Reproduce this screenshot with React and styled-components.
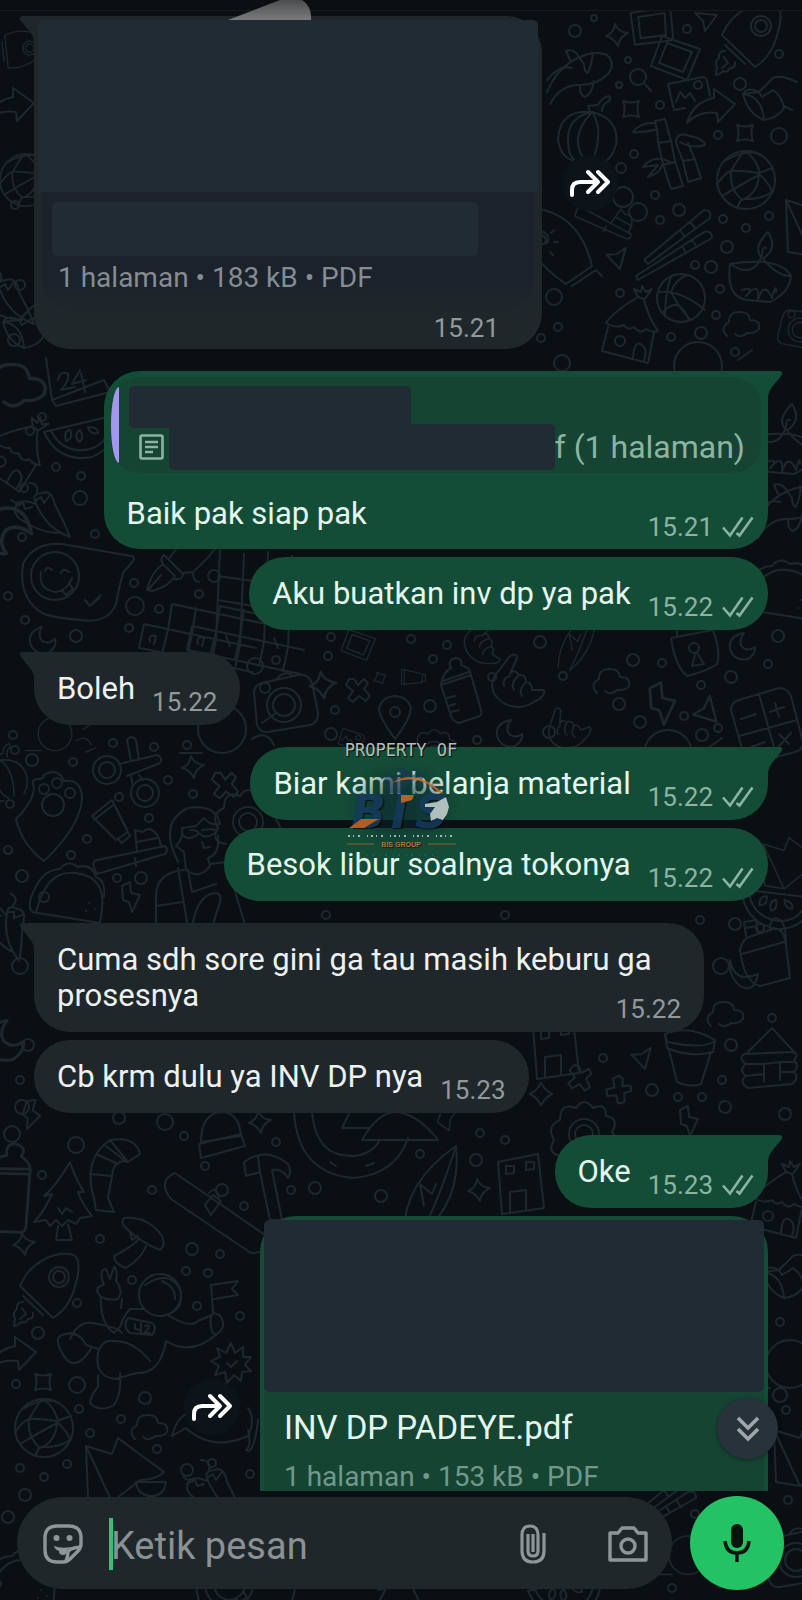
import React from 'react';
import styled, { createGlobalStyle, css } from 'styled-components';

const colors = {
  page: '#0a0f13',
  doodle: '#20272c',
  incoming: '#1f272a',
  outgoing: '#144d37',
  outgoingInset: '#154433',
  cover: '#202b33',
  textIn: '#eef1f2',
  metaIn: '#92999c',
  metaOut: '#8db3a1',
  accent: '#23c264',
};

const GlobalStyle = createGlobalStyle`
  *, *::before, *::after {
    box-sizing: border-box;
  }

  body {
    margin: 0;
    background: ${colors.page};
    font-family: Roboto, "Liberation Sans", sans-serif;
  }

  button {
    border: 0;
    padding: 0;
    font: inherit;
    cursor: pointer;
  }
`;

const Page = styled.div`
  position: relative;
  display: flex;
  flex-direction: column;
  height: 100vh;
  overflow: hidden;
`;

const WallpaperSvg = styled.svg`
  position: absolute;
  inset: 0;
  width: 100%;
  height: 100%;
  fill: none;
  stroke: ${colors.doodle};
  stroke-width: 2;
  stroke-linecap: round;
  stroke-linejoin: round;
`;

const TopEdge = styled.header`
  position: relative;
  flex: none;
  height: 11px;
  background: #0b0f12;
  border-bottom: 1px solid #161b1e;
`;

const PeekSvg = styled.svg`
  position: absolute;
  left: 228px;
  top: 0;
  z-index: 1;
`;

const Chat = styled.main`
  position: relative;
  flex: 1;
  min-height: 0;
  padding: 5px 34px 0;
  overflow: hidden;
`;

const List = styled.ol`
  display: flex;
  flex-direction: column;
  margin: 0;
  padding: 0;
  list-style: none;
`;

const Row = styled.li`
  display: flex;
  flex: none;
  align-items: center;
  gap: 20px;
  justify-content: ${({ $out }) => ($out ? 'flex-end' : 'flex-start')};
  margin-top: ${({ $first }) => ($first ? '22px' : '8px')};

  &:first-child {
    margin-top: 0;
  }
`;

const tail = css`
  border-top-${({ $out }) => ($out ? 'right' : 'left')}-radius: 0;

  &::before {
    content: '';
    position: absolute;
    top: 0;
    ${({ $out }) => ($out ? 'left: 100%;' : 'right: 100%;')}
    width: 15px;
    height: 28px;
    background: inherit;
    clip-path: path('M0 0H12Q16 1 13 5L4 16Q0 21 0 28Z');
    ${({ $out }) => !$out && 'transform: scaleX(-1);'}
  }
`;

const Bubble = styled.div`
  position: relative;
  max-width: 670px;
  border-radius: 36px;
  color: ${({ $out }) => ($out ? '#e4f7ee' : colors.textIn)};
  background: ${({ $out }) => ($out ? colors.outgoing : colors.incoming)};
  ${({ $tail }) => $tail && tail}
`;

const TextBubble = styled(Bubble)`
  padding: 19px ${({ $out }) => ($out ? '14px' : '23px')} 10px 23px;
`;

const QuoteBubble = styled(Bubble)`
  padding: 6px 7px 9px;
`;

const DocBubble = styled(Bubble)`
  width: 508px;
  padding: 4px 4px 8px;
`;

const Text = styled.p`
  display: flow-root;
  margin: 0;
  font-size: 31px;
  line-height: 36px;
`;

const ReplyText = styled(Text)`
  margin: 23px 7px 0 16px;
`;

const Meta = styled.span`
  float: right;
  display: flex;
  align-items: center;
  gap: 9px;
  margin: 18px 0 0 17px;
  color: ${({ $out }) => ($out ? colors.metaOut : colors.metaIn)};
  font-size: 26px;
  line-height: 26px;
`;

const Quote = styled.div`
  position: relative;
  display: flex;
  align-items: center;
  gap: 10px;
  padding-right: 16px;
  border-radius: 28px;
  background: ${colors.outgoingInset};
`;

const QuoteBar = styled.span`
  width: 8px;
  height: 76px;
  border-radius: 8px 0 0 8px / 38px 0 0 38px;
  background: #a397f0;
`;

const QuoteBody = styled.div`
  flex: 1;
  padding: 9px 0 3px;
`;

const Cover = styled.div`
  flex: none;
  width: ${({ $w }) => $w};
  height: ${({ $h }) => $h};
  border-radius: 5px;
  background: ${colors.cover};
`;

const QuoteFile = styled.div`
  display: flex;
  align-items: center;
  margin-top: -4px;
  padding-left: 10px;
  color: ${colors.metaOut};
  font-size: 32px;
  line-height: 36px;

  svg {
    margin-right: 5px;
  }
`;

const DocInfo = styled.div`
  margin: 0 ${({ $out }) => ($out ? '0' : '4px')};
  padding: ${({ $out }) => ($out ? '16px 20px 97px' : '10px 10px 19px')};
  border-radius: 0 0 32px 32px;
  background: ${({ $out }) => ($out ? colors.outgoingInset : 'linear-gradient(#1b222b 75%, #1f272a)')};
`;

const DocTitle = styled.div`
  margin-bottom: 14px;
  font-size: 33px;
  line-height: 40px;
`;

const DocDetails = styled.div`
  margin: ${({ $out }) => ($out ? '0' : '7px 6px 0')};
  color: ${({ $out }) => ($out ? '#73988a' : '#858c92')};
  font-size: 28px;
  line-height: 30px;
`;

const DocTime = styled.div`
  padding: 3px 39px 0 0;
  color: ${colors.metaIn};
  font-size: 26px;
  line-height: 26px;
  text-align: right;
`;

const ForwardButton = styled.button`
  display: grid;
  place-items: center;
  width: 56px;
  height: 56px;
  border-radius: 50%;
  background: #0c141a;
`;

const JumpButton = styled.button`
  position: absolute;
  right: 24px;
  bottom: 32px;
  display: grid;
  place-items: center;
  width: 61px;
  height: 61px;
  border-radius: 50%;
  background: #27323a;
  box-shadow: 0 1px 4px rgba(0, 0, 0, 0.4);
`;

const Composer = styled.form`
  position: relative;
  display: flex;
  flex: none;
  align-items: center;
  gap: 18px;
  padding: 5px 18px 10px 17px;
`;

const Field = styled.div`
  display: flex;
  flex: 1;
  align-items: center;
  min-width: 0;
  height: 92px;
  padding: 2px 24px 0 26px;
  border-radius: 46px;
  background: ${colors.incoming};
`;

const FieldInput = styled.input`
  flex: 1;
  min-width: 0;
  height: 52px;
  margin: 0 26px;
  padding: 3px 0 0;
  border: 0;
  border-left: 4px solid #35c275;
  outline: 0;
  color: ${colors.textIn};
  background: transparent;
  font-family: inherit;
  font-size: 38px;
  text-indent: -2px;

  &::placeholder {
    color: #8b9194;
    opacity: 1;
  }
`;

const IconButton = styled.button`
  display: grid;
  place-items: center;
  background: transparent;
  color: #8f9699;

  & + & {
    margin-left: 62px;
  }
`;

const MicButton = styled.button`
  display: grid;
  place-items: center;
  width: 94px;
  height: 94px;
  border-radius: 50%;
  background: ${colors.accent};
  color: #08130d;
`;

const Watermark = styled.div`
  position: absolute;
  top: 46.25%;
  left: 50%;
  transform: translateX(-50%);
  color: #b4bcbf;
  font: 17px/20px "DejaVu Sans Mono", monospace;
  text-align: center;
  text-shadow: 1px 1px 1px rgba(0, 0, 0, 0.8);
  pointer-events: none;

  svg {
    display: block;
  }
`;

const doodles = {
  rocket: (
    <>
      <path d="M-30-2C-20-26 5-38 24-33Q32-28 26-5 20 20 3 30ZM-27 8-7 27" />
      <circle cx="9" cy="-11" r="10" />
      <circle cx="9" cy="-11" r="6" />
      <path d="M-27 14q-7 0-6 7-5 4-2 9l-1 8q5-1 7-4 5 2 7-3 6 0 5-6M-28 20l4 6-6 5" />
    </>
  ),
  globe: (
    <>
      <circle r="29" />
      <path d="M-20-20Q2-32 15-25M-29 4Q-20-8-15-9T13-7L27-12M-24 16Q-4 4 13-5M-15-9Q-6-24-2-29M-15-9Q-17 8-5 19M13-6Q12 14-4 20M14-7Q10-22 0-28M-5 20l-4 8M-5 19Q14 20 24 13M13-6Q24 4 26 12" />
    </>
  ),
  star: <path d="M-2-11Q1-3 11-2 2 2 1 11-3 3-11 1-3-2-2-11Z" />,
  spark: <path d="M-8-8Q0-5 8-8 5 0 8 8 0 5-8 8-5 0-8-8Z" />,
  plane: <path d="M-11-9 11-7-1 9-3-1Z" />,
  arrow: <path d="M-24 17Q-18-4 3-8V-17L24-2 7 16 6 7Q-12 4-24 17Z" />,
  boot: <path d="M-27-8Q-22-16-11-10L3-24Q10-28 27-20M-11-10-8-5 3-12Q12-6 14 6 8 16-6 18-22 12-27-8ZM-27-8Q-8-6-6 18M14 4l8 4" />,
  photo: <path d="M-16-22 22-9 9 22-27 8ZM-11-15 14-6 5 14-19 5Z" />,
  picture: (
    <>
      <path d="M-20-11 15-18Q18-18 19-14L22 1M-20-11-14 15-3 13M-12 7-8-3-3 3 2-2 7 6" />
      <circle cx="10" cy="-10" r="4" />
    </>
  ),
  magnifier: (
    <>
      <circle cx="-2" cy="-3" r="8" />
      <path d="M4 3l7 8" />
    </>
  ),
  pumpkin: <path d="M4-25Q-28-28-30 2-28 20-14 24M4-25Q-20-20-20 2T-9 24M4-25Q-10-10-10 3T-2 24M4-25Q16-8 5 23M4-25Q32-18 28 8 24 20 18 24M2-25l-2-6 10-1Q14-40 21-41q3 4-2 6-5 3-5 9" />,
  bamboo: <path d="M-13-34Q-10-22-10-13L-5 9 3 34 15 31 7 6 3-14-3-36ZM-10-12 3-14M-6 10 7 7M-13-32Q-28-33-35-23-25-22-11-26M8-12 15 6 20 27 33 23 27 5 20-12M15 6 27 4M8-12Q8-24 22-19 36-16 37-10 24-6 12-13M4 8Q-14-2-25 12L-10 10-20 22Q-7 18-6 10" />,
  fish: <path d="M-35 26Q-24 0-2-9 14-16 25-11 34-2 26 8 14 20-5 19-22 20-32 38M-35 14Q-22-2-10 2M-12-6-16-15Q-8-18-3-9L2-2q0 8 4 9Q12-8 10-14M-2 20Q-2 30 3 31 10 28 12 15" />,
  peppers: <path d="M-15-12Q-5 15 20 24 14 8 5-8 2-24-8-20-18-19-15-12ZM-13-20q2-10-8-10M-15-12l6-4 3 6 6-8M-15-9Q-24-14-33-10-38 0-30 6-10 20 8 20M-33-7l6-3 2 6 7-2M-34-10l-5-3" />,
  melon: <path d="M-32-5 40-22Q44 8 16 20-18 26-32-5ZM-25-6Q-12 18 14 12 34 6 34-19M-10 4q-3-10 4-11 4 8-4 11ZM3 5q-6-8 1-12 5 9-1 12ZM12-10q10 0 10 6-8 2-10-6Z" />,
  laughing: (
    <>
      <path d="M-53-18Q-42-40-14-38L55-26Q60-25 57-21L47-9Q42 10 40 22 32 42 5 38-20 36-32 32-58 18-53-18Z" />
      <circle cx="-21" cy="-6" r="24" />
      <path d="M-35-10Q-38 8-20 10-8 8-4-4M-14 8l4 5 7-6-4-6M-31-11q2-6 7-1M-15-9q2-6 8-1M9 18l5 6 9-8M16 22l9-9" />
    </>
  ),
  calendar: <path d="M-30-30-24 12-20 18 34 4 28-8-24 12M-18-8q2-10 10-6 2 6-7 16l14-3M4-18-4-4 10-8M5-15 9 4" />,
  pen: <path d="M-28 22Q-24 4-12-4L0 8Q-6 18-22 23ZM-12-4q-4-6 1-9L8 6q0 6-8 5M-26 21l12-14M-6-9 6-26M8 5 18 4Q34-10 42-22M18 4q0 10 6 10" />,
  crossword: <path d="M-56 4 56 28M-60 28 52 52M-56 4l-5 24M-32 10l-6 24M-8 14l-5 24M16 20l-5 24M40 25l-5 24M-28-16 66 4M-28-16-32 10M-4-12-8 14M20-70 16 20M44-66 40 25M18-44 60-38M18-20 64-12M-50 22q-2-8 6-6l-2 8M26 16l4 10" />,
  moon: <path d="M2-13Q-14-10-12 3-8 16 6 13 14 8 13 1 6 6 0 1-4-5 2-13Z" />,
  pulley: (
    <>
      <path d="M-14-36Q-18-44-10-44-4-44-4-48 10-56 16-42 34-44 34-24 32 4-4 38-26 22-32-4-14-22-14-36Z" />
      <circle cx="5" cy="-18" r="11" />
      <circle cx="-4" cy="-34" r="5" />
      <circle cx="9" cy="-40" r="5" />
      <circle cx="22" cy="-30" r="5" />
    </>
  ),
  scissors: (
    <>
      <circle cx="-20" cy="2" r="14" />
      <circle cx="-20" cy="2" r="8" />
      <circle cx="18" cy="25" r="14" />
      <circle cx="18" cy="25" r="8" />
      <path d="M-8-4 30-13Q36-11 33-5L0 8M4-7 0-28Q4-34 9-28L12-8M4 8 6 18M12 7l4 5" />
    </>
  ),
  cup: <path d="M-18-10 2-26 18 6 6 14ZM-16-6 3-21M8 13l4 4 8-7-3-6" />,
  brush: <path d="M-36 12Q-40 4-34 2L34-12Q38-8 34-4L-34 16ZM6-6 4-28 12-26Q20-34 28-20L30-12M6-16l20-4M4 0l1 8" />,
  taco: (
    <>
      <path d="M-32 20Q-22-24 8-20 38-16 34 16L32 30-30 20M-32 20Q-42 18-36 2-26-24-8-24 0-34 10-26 24-30 28-16 38-12 36 4" />
      <circle cx="-24" cy="4" r="5" />
      <path d="M21 10l0 0M27 16l0 0M18 18l0 0" />
    </>
  ),
  bolt: <path d="M-8-12 0-16 1-5 10-3 2 14-1 4-7 2Z" />,
  camera: (
    <>
      <path d="M-30-12Q-30-20-22-22L14-30Q24-32 28-22L34 8Q34 18 26 20L-16 27Q-24 28-27 20ZM-8-25Q0-36 10-29" />
      <circle r="17" />
      <circle r="11" />
      <circle cx="-19" cy="-17" r="5" />
    </>
  ),
  cross: <path d="M-9-11-4-11 0-5 6-11 10-7 6-1 12 6 8 11 1 6-5 12-10 8-5 1-12-5Z" />,
  pin: (
    <>
      <path d="M0 22Q-16 0-16-8-14-20 0-21 14-20 16-8 14 4 0 22Z" />
      <circle cy="-5" r="5" />
    </>
  ),
  bottle: <path d="M-22-5 8-15 18 20Q20 26 14 27L-4 33Q-10 32-12 26ZM-22-5Q-20-18-12-22-16-30-8-32 0-32-2-25 8-22 8-15M-20-9 6-18M-16 8l8-2M-14 16l6-2M-12 22l8-2" />,
  hand: <path d="M0-26Q6-30 7-24L0-8Q4-14 9-7 16-8 16 0 22 0 22 8L34 8Q36 14 24 20 8 30-8 20-24 8-14-8ZM-6 4q-2-8 6-10M4 8q-4-6 4-14M12 14q-4-6 4-14" />,
  cloud: <path d="M-14 12Q-22 4-12-2-12-13 0-12 8-12 9-4 20-4 18 5 14 10 6 9 0 15-6 10-12 12Z" />,
  lock: (
    <>
      <path d="M-24-14 18-22Q26 0 22 12 10 20-8 24-20 14-24-14ZM-18-16-18-30M12-22 10-32M0 3-3 14 9 12 2 1" />
      <circle cx="-1" cy="-4" r="5" />
    </>
  ),
  calculator: <path d="M-34-10Q-34-18-26-20L14-32Q22-32 26-24L38 22Q38 30 30 32L-8 42Q-18 42-22 32ZM-6-26 12 38M-26 16 32 0M-24-1 -9-6M5-8 19-13M10-17 14-3M14 14 24 24M26 13 14 26M-14 27 0 22M-12 34 2 29" />,
  chopsticks: <path d="M-32 20 28-30Q36-30 34-22L-28 24ZM-40 36 28-8Q36-10 36-2L-38 40ZM4-10 8-4M14-18 19-12M6 6 10 13M16 0 21 7" />,
  ball: (
    <>
      <circle r="24" />
      <path d="M-22-6Q0-8 24 12M-10-22Q-16-4-16 18M6-23Q-6-18-10-6-2 10 10 22M-18 14Q-8 4-2 8T8 22" />
    </>
  ),
  lamp: <path d="M-30-4Q-34 28-14 32L10 34Q30 24 31 8 20-12-30-4ZM-28-3Q-8 10 1-10M4-8Q18 8 30 8M2-10Q-8-20 8-36 18-20 4-10ZM2-12q0-10 4-8M-18 22Q-4 18-14 28 0 12-2 32 4 12 12 30 16 14 16 24" />,
  hut: (
    <>
      <path d="M-26-12Q-20-22 6-38L12-36Q16-18 26-4 20-2 14-6 8 0 2-8-4-4-8-10-16-6-26-12ZM-24-8-30 16 16 28 22-2M6-38l-4-8 7 3 1-6 4 6 6-3-8 11M1 24Q2 4 10 10 16 14 12 26" />
      <circle cx="-12" cy="6" r="5" />
    </>
  ),
  surfboard: <path d="M-28-40Q18-34 30 18L4 36Q-26 16-42-16-44-34-28-40ZM4 36 30 18M10 38 34 22 40 28M-24-8a4 4 0 1 1 5 4q-8 0-7-8 6-8 12 0 1 4-1 7M-22-20v-4M-8-6h4M-36-6h-3M-22 8v4M-11-15l3-3M-33-15-36-18M-12 4l3 3" />,
  tree: <path d="M4-44Q-10-20-22-10L-14-12Q-22 6-32 16L-20 14-16 20-10 14-4 20 2 14 10 18 14 12 26 10Q16-2 12-14L18-14Q10-26 4-44ZM-8 20-10 34H6L2 18M-8 2l4 6 4-6 6 4" />,
  mushroom: <path d="M-16-22Q8-24 22-4 26 6 20 10 0 2-14-12-20-18-16-22ZM-2 0Q-10 8-26 16-26 24-14 28 2 18 6 6M-10-8l2 8 6-4" />,
  astronaut: (
    <>
      <circle cx="2" cy="-40" r="21" />
      <path d="M-13-50Q10-66 22-46 28-24 4-19M4-54Q18-48 17-36M-57-38Q-58-12-44-2L-38-8Q-34-20-28-26H-14M-57-38Q-66-48-54-50-60-66-52-66L-48-56-44-68Q-40-66-42-54-34-44-40-36-48-34-57-38M-36-36-37-27M10-20Q32-6 40-14L54-20M8 6Q34 22 60-2M56-22Q66-20 65-8 58 4 54-4 50-18 56-22ZM55-22 53-50 80-54 74-46 80-40 56-36M8 6Q2 40-22 38L-42 44Q-64 42-60 18-56 4-44 6-24 6-8 26M-38 38Q-36 58-44 70-58 78-68 68-66 58-60 52L-60 40M-60 14-72 10Q-80-6-96 0-106 4-92 24-80 36-66 12M-88 4Q-80-14-66-12-40-8-36-2" />
      <path d="M-30-17-6-12Q0-8-6 0L-28-2Q-36-8-30-17ZM-23-11v5l6 1M-17-12v11M-13-9q5-2 4 2l-5 5h6" />
    </>
  ),
  burst: <path d="M0-20 4-10 12-16 12-6 20-6 14 2 20 8 11 9 10 18 3 12-4 20-6 9-16 12-12 3-20-2-11-6-14-15-5-10ZM-4 0l4 4 6-6" />,
  sail: <path d="M-26-20-24 32 0 36ZM-26-20 0-12 6-28 52 6Q44 14 28 14L0 36ZM24 16H54Q52 30 40 30 26 30 24 16Z" />,
  whale: <path d="M-50 20Q-44-2-30-4-32-24-18-24L8-18M-50 20-36 12Q-10 36 26 20 34 4 26-8M26 14Q30 30 24 34 32 40 36 4" />,
  shrimp: <path d="M-32 30Q-44-8-16-28 10-32 14-14L2-6Q-12-10-14 8L-18 30-12 44-30 42ZM-16-28 2-6M-30-14-8-4M-36 6-14 8M-20-22 -2-8" />,
  hammer: <path d="M-22-18Q0-34 22-16 26-8 22-2 16-12 6-10L16 40H4L-6-8-20-4ZM-8-24-6-8" />,
  ring: <path d="M-58-32Q-54 30 2 34 44 30 56-6M-40-32Q-36 14 2 12 20 10 28-4M-10-16-2-32M-10-16H18M10-4Q26-32 44-32 66-30 86-4ZM-22 18l6 4M14 22l8-3" />,
  beanie: <path d="M-18 4Q-18-24 2-26 20-26 22-2ZM-20 6 22-4 26 8-18 20ZM-2-27q0-8 6-6 6-4 4 5" />,
  flower: (
    <>
      <circle r="15" />
      <circle r="9" />
      <path d="M-8-26Q0-38 9-26 22-32 22-18 36-16 28-2 38 10 24 14M-8-26Q-24-32-24-14-38-8-30 6-38 20-22 22" />
    </>
  ),
  pot: <path d="M-24-26Q0-36 26-20 18-10-22-18ZM-24-26-22-12Q2-2 24-8L26-20M-20-10-12 22Q2 28 12 24L22-8" />,
  cabin: <path d="M-20-8 4-32 28-6M-24-6Q-30-2-22 4-30 10-22 16-30 22-20 28L24 24Q32 18 26 12 32 6 26 0 32-6 24-8ZM-4 22V4L12 2V20M-22 4H-4M12 2H26M-22 16-4 14M12 12H26" />,
  milk: <path d="M-20-8Q-18-20-8-22L10-28Q24-34 26-12L30 20 0 28Q-16 24-20-8ZM-14-22-16-36-4-38-2-24M-14-30-4-32M10-28Q10-44 20-38 26-34 26-14M-18-4 24-16M-30 2Q-26 26-2 16-6 36-20 28-32 18-30 2Z" />,
  person: <path d="M-14 0Q-34-40-4-54 24-58 28-38 18-36 12-44L4-36-10-34Q-8-24-16-16L-8-10-6 8Q8 18 18 4L16-4Q28-8 26-26M-10-28q6 8 16 0 2-4-8-4M8-28q6 6 16-2 2-4-14-2M10-20l2 6 6-1M-8 8Q-34 10-36 32V66M-14 6-4 66M18 2 34 0 54 66M-4 8 0 30 24 22M-36 44-10 40M0 66Q4 38 18 32 34 28 26 46L20 66" />,
  house: <path d="M-22-18 18-26 24 28-18 34ZM-10 32V12L6 10V30M-14-6V-14H-6V-7ZM6-10V-18H14V-11Z" />,
  leaf: <path d="M-24 40Q-24-10 28-46 34 10-8 44M-8 44Q10 10 28-46M-4 14-8-8 4 2 8-8" />,
  board: <path d="M-40-42Q-58-34-44-16L36 38Q58 38 50 20ZM-10-10-2-20 6-14-4 0ZM-6-22q6-8 10 4" />,
  ghost: (
    <>
      <circle cy="-6" r="24" />
      <path d="M-42 18h22M30 4q14-10 22 6M40-12l14-10M44 20l14-6" />
    </>
  ),
};

const wallpaper = [
  ['rocket', 752, 37], ['rocket', 50, 1288], ['globe', 746, 180], ['globe', 44, 1428], ['globe', 26, 180, 0, 0.9],
  ['star', 617, 35], ['spark', 631, 109], ['spark', 745, 133], ['plane', 706, 22], ['plane', 615, 257, 100],
  ['photo', 678, 58], ['photo', 655, 25, -28], ['picture', 688, 95], ['arrow', 711, 106], ['boot', 770, 102],
  ['magnifier', 640, 80], ['pumpkin', 588, 137], ['bamboo', 668, 155], ['fish', 582, 66], ['surfboard', 562, 248],
  ['chopsticks', 676, 240], ['ball', 681, 298], ['lamp', 760, 268], ['hut', 632, 335], ['cloud', 741, 324],
  ['ghost', 698, 372], ['sail', 812, 220], ['brush', 604, 224, 40, 0.8], ['camera', 800, 330, 20, 0.7],
  ['peppers', 50, 513], ['melon', 76, 437], ['calendar', 76, 388], ['laughing', 76, 582], ['pen', 175, 568],
  ['crossword', 200, 620], ['moon', 42, 640, -10], ['arrow', 10, 105], ['rocket', 20, 50, 40, 0.7], ['cloud', 14, 385, 0, 1.7],
  ['hut', 14, 460, 20], ['peppers', 14, 300], ['boot', 30, 330], ['moon', 8, 530, 90, 1.8],
  ['pin', 395, 717], ['camera', 284, 705], ['star', 323, 685, 0, 1.2], ['cross', 358, 690], ['bottle', 463, 690],
  ['hand', 510, 682], ['hand', 562, 730, -20, 0.8], ['hand', 480, 640, 30, 0.8], ['cloud', 611, 681], ['bolt', 661, 705, 0, 1.4],
  ['plane', 704, 712, 70, 1.2], ['lock', 695, 652], ['moon', 742, 646], ['calculator', 765, 720], ['moon', 509, 733],
  ['flower', 434, 752, 0, 0.7], ['leaf', 575, 640, 0, 0.7], ['crossword', 248, 622], ['picture', 350, 740, 30, 0.6],
  ['photo', 360, 645, 0, 0.7], ['ghost', 668, 760], ['spark', 380, 678, 20, 0.6], ['cup', 413, 680, -50, 0.6],
  ['pulley', 48, 823], ['scissors', 127, 768], ['cup', 110, 826], ['brush', 131, 858], ['taco', 68, 893],
  ['bolt', 130, 898], ['person', 192, 862], ['star', 193, 767], ['cross', 225, 785, 0, 1.1],
  ['ghost', 222, 735], ['ghost', 55, 738, 0, 0.7], ['pumpkin', 4, 780, -20, 0.8], ['flower', 248, 822],
  ['taco', 780, 590], ['lamp', 784, 440], ['fish', 790, 500], ['sail', 784, 860, 0, 0.8],
  ['melon', 770, 905, 20], ['milk', 760, 958], ['pot', 689, 1060], ['cabin', 768, 1060], ['house', 555, 1045],
  ['plane', 640, 1057, 100], ['flower', 584, 1134], ['bolt', 688, 1122], ['cross', 580, 1078, 15], ['cross', 619, 1090, 40],
  ['spark', 541, 1094, 45], ['cloud', 725, 1014], ['hammer', 266, 1180], ['shrimp', 126, 1168], ['beanie', 219, 1138],
  ['star', 260, 1122], ['ring', 352, 1144], ['leaf', 428, 1192], ['star', 479, 1190], ['house', 520, 1180],
  ['board', 215, 1215], ['tree', 66, 1206], ['mushroom', 140, 1240], ['star', 24, 1244], ['astronaut', 158, 1335],
  ['burst', 231, 1363], ['arrow', 12, 1354], ['spark', 43, 1382], ['cloud', 149, 1427], ['sail', 112, 1466],
  ['whale', 222, 1416], ['peppers', 222, 1490], ['shrimp', 475, 1105, 30, 0.8], ['bottle', 12, 1190, 20, 1.4],
  ['hut', 780, 1210], ['boot', 790, 1280], ['ghost', 790, 1370], ['sail', 800, 1450], ['bolt', 30, 1115, 20], ['moon', 4, 1040, 0, 1.5],
  ['ghost', 688, 1560, 0, 0.8], ['camera', 796, 1560], ['tree', 400, 1600], ['taco', 20, 1580], ['peppers', 14, 930, 30],
  ['laughing', 250, 1590], ['melon', 560, 1596], ['chopsticks', 660, 1500],
];

const dots = [
  [575, 31, 6], [594, 18, 3], [628, 60, 3], [619, 85, 3], [687, 29, 4], [779, 54, 4], [740, 84, 6], [660, 105, 4],
  [779, 136, 8], [718, 135, 4], [634, 154, 4], [621, 168, 5], [655, 195, 4], [638, 212, 9], [679, 210, 6], [660, 220, 4],
  [623, 197, 10], [723, 219, 4], [769, 216, 4], [746, 228, 4], [727, 247, 6], [711, 267, 6], [695, 265, 4], [720, 289, 4],
  [554, 297, 8], [620, 293, 4], [558, 327, 4], [541, 338, 4], [716, 315, 4], [701, 333, 6], [735, 352, 4], [671, 337, 4],
  [562, 363, 8], [42, 417, 4], [30, 431, 4], [56, 467, 4], [81, 476, 4], [24, 488, 4], [80, 498, 7], [22, 537, 4],
  [95, 534, 4], [8, 596, 4], [25, 620, 4], [76, 636, 6], [135, 606, 9], [134, 583, 4], [214, 576, 6], [199, 594, 4],
  [159, 609, 4], [129, 628, 4], [15, 205, 4], [14, 340, 6], [20, 285, 5], [13, 735, 4], [32, 760, 6], [73, 762, 4],
  [15, 750, 4], [113, 743, 4], [154, 747, 4], [187, 745, 4], [168, 780, 4], [193, 794, 4], [119, 797, 4], [149, 818, 4],
  [10, 804, 4], [87, 839, 4], [71, 855, 4], [22, 876, 6], [117, 878, 4], [141, 878, 6], [8, 850, 4], [255, 666, 8],
  [276, 660, 4], [328, 656, 4], [331, 637, 4], [411, 639, 4], [447, 645, 4], [433, 659, 4], [540, 642, 6], [492, 677, 4],
  [563, 676, 4], [430, 706, 6], [619, 704, 6], [640, 722, 6], [335, 710, 4], [331, 734, 6], [477, 740, 4], [549, 732, 6],
  [633, 660, 6], [662, 663, 4], [731, 677, 6], [701, 685, 4], [768, 664, 4], [778, 636, 6], [684, 716, 4], [702, 735, 6],
  [718, 728, 4], [20, 966, 8], [28, 1045, 6], [20, 1080, 4], [22, 1107, 7], [12, 1134, 8], [76, 1145, 8], [119, 1118, 6],
  [165, 1122, 8], [184, 1136, 4], [276, 1142, 4], [205, 1166, 4], [42, 1175, 4], [222, 1190, 6], [244, 1206, 4],
  [152, 1190, 4], [291, 1190, 4], [315, 1188, 6], [381, 1196, 6], [420, 1154, 4], [476, 1160, 6], [480, 1133, 4],
  [505, 1140, 4], [603, 1058, 4], [652, 1090, 6], [678, 1097, 4], [702, 1097, 4], [725, 1107, 6], [785, 1114, 6],
  [722, 1080, 4], [731, 1045, 6], [721, 966, 8], [772, 1018, 4], [735, 924, 6], [760, 928, 4], [100, 1239, 4],
  [192, 1249, 6], [220, 1254, 4], [186, 1271, 4], [208, 1273, 4], [132, 1280, 4], [77, 1303, 4], [197, 1306, 4],
  [240, 1316, 4], [38, 1333, 6], [77, 1385, 8], [16, 1384, 4], [79, 1409, 4], [121, 1419, 4], [145, 1398, 6],
  [90, 1433, 4], [157, 1449, 4], [20, 1468, 4], [44, 1477, 4], [67, 1464, 4], [187, 1470, 6], [212, 1463, 4],
  [250, 1474, 4], [25, 1495, 6], [8, 1517, 6], [780, 1322, 4], [780, 1395, 7], [786, 1410, 4],
  [695, 1514, 4], [672, 1588, 4], [788, 1500, 4], [700, 920, 4], [326, 915, 4], [505, 915, 4],
];

const Wallpaper = () => (
  <WallpaperSvg viewBox="0 0 802 1600" preserveAspectRatio="xMidYMin slice" aria-hidden="true">
    {wallpaper.map(([kind, x, y, rotate = 0, scale = 1], index) => (
      <g key={index} transform={`translate(${x} ${y}) rotate(${rotate}) scale(${scale})`}>{doodles[kind]}</g>
    ))}
    {dots.map(([x, y, r], index) => <circle key={index} cx={x} cy={y} r={r} />)}
  </WallpaperSvg>
);

const Ticks = () => (
  <svg width="32" height="22" viewBox="0 0 32 22" fill="none" stroke="currentColor" strokeWidth="2.6" role="img" aria-label="Terkirim">
    <path d="M1 11.5 8 19.5 20.5 1.5M14.5 17 17.5 19.5 30.5 1.5" />
  </svg>
);

const ForwardIcon = () => (
  <svg width="42" height="30" viewBox="0 0 42 30" fill="none" stroke="#fff" strokeWidth="4" strokeLinecap="round" strokeLinejoin="round">
    <path d="M3 27V22Q3 14 11 14H27M19 4 29 14 19 24M29 4 39 14 29 24" />
  </svg>
);

const PageIcon = () => (
  <svg width="25" height="26" viewBox="0 0 25 26" fill="none" stroke="currentColor" strokeWidth="2.6">
    <rect x="1.5" y="1.5" width="22" height="23" rx="1.5" />
    <path d="M6 8H19M6 13H19M6 18H14" />
  </svg>
);

const StickerIcon = () => (
  <svg width="40" height="40" viewBox="0 0 40 40" fill="none" stroke="currentColor" strokeWidth="3.4" strokeLinejoin="round">
    <path d="M20 2H14Q2 2 2 14V26Q2 38 14 38H20Q24 38 27 35L35 27Q38 24 38 20V14Q38 2 26 2Z" />
    <path d="M23 37Q25 32 25 28 26 24 38 23" />
    <path d="M11 22Q18 25 28 23L24 26Q24 31 20 31 16 31 16 27 12 26 11 22Z" fill="currentColor" stroke="none" />
    <circle cx="13.500" cy="14" r="3" fill="currentColor" stroke="none" />
    <circle cx="26.500" cy="14" r="3" fill="currentColor" stroke="none" />
  </svg>
);

const ClipIcon = () => (
  <svg width="26" height="40" viewBox="0 0 26 40" fill="none" stroke="currentColor" strokeWidth="3.2">
    <path d="M24 9V27Q24 38 13 38 2 38 2 27V11Q2 2 10 2 18 2 18 11V27Q18 32 13 32 8 32 8 27V10" />
    <path d="M13 10V28" />
  </svg>
);

const CameraIcon = () => (
  <svg width="40" height="36" viewBox="0 0 40 36" fill="none" stroke="currentColor" strokeWidth="3.4" strokeLinejoin="round">
    <path d="M2 7H10L14 2H26L30 7H38V34H2Z" />
    <circle cx="20" cy="20" r="7" />
  </svg>
);

const MicIcon = () => (
  <svg width="28" height="38" viewBox="0 0 28 38" fill="none" stroke="currentColor" strokeWidth="3.4">
    <rect x="8" y="0" width="12" height="24" rx="6" fill="currentColor" stroke="none" />
    <path d="M2 17Q3 29 14 29 25 29 26 17M14 29V38" />
  </svg>
);

const ChevronsIcon = () => (
  <svg width="24" height="28" viewBox="0 0 24 28" fill="none" stroke="#9ea7ac" strokeWidth="3.6">
    <path d="M2 3 12 13 22 3M2 14 12 24 22 14" />
  </svg>
);

const GroupLogo = () => (
  <svg width="120" height="102" viewBox="0 0 120 102">
    <defs>
      <radialGradient id="shade">
        <stop offset="0.3" stopColor="#0b2630" stopOpacity="0.6" />
        <stop offset="1" stopColor="#0b2630" stopOpacity="0" />
      </radialGradient>
    </defs>
    <ellipse cx="60" cy="45" rx="60" ry="46" fill="url(#shade)" />
    <g opacity="0.85" transform="translate(6 -1)">
      <path d="M42 34V24l-6-2 4-7 7 3 5-3-1-6h9l1 6 6 1 4-5 7 4-3 6 5 5 6-1 3 9Q68 8 54 34Z" fill="#17395a" opacity="0.6" />
      <path d="M45 24Q68 8 97 35L91 33Q72 14 45 24Z" fill="#cf6a1f" />
      <g fill="#153a5e" fontFamily="DejaVu Sans, sans-serif" fontSize="46" fontWeight="700" fontStyle="italic">
        <text x="4" y="69">B</text>
        <text x="44" y="69">I</text>
        <text x="68" y="69">S</text>
      </g>
      <path d="M54 36H67L65 41 54 44ZM2 69 14 60H32L17 69Z" fill="#cf6a1f" />
      <path d="M78 45 90 43 99 38 102 48 100 55 96 61 90 59 84 62 83 55 88 48H78Z" fill="#cbd6d6" />
      <path d="M1 77H109" stroke="#b9cbd0" strokeWidth="2" strokeDasharray="2 3 1 4 2 7 1 3" />
      <path d="M0 85H27M81 85H109" stroke="#a86532" />
      <path d="M20 96H90" stroke="#33546e" strokeWidth="2" strokeDasharray="1 4 2 6" />
      <text fill="#d0803c" fontFamily="Liberation Sans, sans-serif" fontSize="7" fontWeight="700" textAnchor="middle" x="54" y="88">BIS GROUP</text>
    </g>
  </svg>
);

const messages = [
  { text: 'Aku buatkan inv dp ya pak', time: '15.22', out: true },
  { text: 'Boleh', time: '15.22', first: true },
  { text: 'Biar kami belanja material', time: '15.22', out: true, first: true },
  { text: 'Besok libur soalnya tokonya', time: '15.22', out: true },
  { text: 'Cuma sdh sore gini ga tau masih keburu ga prosesnya', time: '15.22', first: true },
  { text: 'Cb krm dulu ya INV DP nya', time: '15.23' },
  { text: 'Oke', time: '15.23', out: true, first: true },
];

const MessageMeta = ({ time, out }) => (
  <Meta $out={out}>
    <time>{time}</time>
    {out && <Ticks />}
  </Meta>
);

const Message = ({ text, time, out, first }) => (
  <Row $out={out} $first={first}>
    <TextBubble $out={out} $tail={first}>
      <Text>
        {text}
        <MessageMeta time={time} out={out} />
      </Text>
    </TextBubble>
  </Row>
);

export default function App() {
  return (
    <Page>
      <GlobalStyle />
      <Wallpaper />
      <TopEdge>
        <PeekSvg width="84" height="20" viewBox="0 0 84 20" aria-hidden="true">
          <defs>
            <linearGradient id="peek" x1="0" x2="0" y1="0" y2="1">
              <stop offset="0" stopColor="#4b4d4e" />
              <stop offset="1" stopColor="#797b7c" />
            </linearGradient>
          </defs>
          <path d="M0 20 52 0H74Q84 6 83 20Z" fill="url(#peek)" />
        </PeekSvg>
      </TopEdge>

      <Chat>
        <List>
          <Row>
            <DocBubble $tail>
              <Cover $w="100%" $h="172px" />
              <DocInfo>
                <Cover $w="426px" $h="54px" />
                <DocDetails>1 halaman • 183 kB • PDF</DocDetails>
              </DocInfo>
              <DocTime>15.21</DocTime>
            </DocBubble>
            <ForwardButton type="button" aria-label="Teruskan"><ForwardIcon /></ForwardButton>
          </Row>

          <Row $out $first>
            <QuoteBubble $out $tail>
              <Quote>
                <QuoteBar />
                <QuoteBody>
                  <Cover $w="282px" $h="42px" />
                  <QuoteFile>
                    <PageIcon />
                    <Cover $w="386px" $h="46px" />
                    <span>f (1 halaman)</span>
                  </QuoteFile>
                </QuoteBody>
              </Quote>
              <ReplyText>
                Baik pak siap pak
                <MessageMeta time="15.21" out />
              </ReplyText>
            </QuoteBubble>
          </Row>

          {messages.map((message) => <Message key={message.text} {...message} />)}

          <Row $out>
            <ForwardButton type="button" aria-label="Teruskan"><ForwardIcon /></ForwardButton>
            <DocBubble $out>
              <Cover $w="100%" $h="172px" />
              <DocInfo $out>
                <DocTitle>INV DP PADEYE.pdf</DocTitle>
                <DocDetails $out>1 halaman • 153 kB • PDF</DocDetails>
              </DocInfo>
            </DocBubble>
          </Row>
        </List>
        <JumpButton type="button" aria-label="Ke pesan terbaru"><ChevronsIcon /></JumpButton>
      </Chat>

      <Composer onSubmit={(event) => event.preventDefault()}>
        <Field>
          <IconButton type="button" aria-label="Stiker"><StickerIcon /></IconButton>
          <FieldInput type="text" placeholder="Ketik pesan" aria-label="Ketik pesan" />
          <IconButton type="button" aria-label="Lampirkan"><ClipIcon /></IconButton>
          <IconButton type="button" aria-label="Kamera"><CameraIcon /></IconButton>
        </Field>
        <MicButton type="button" aria-label="Rekam suara"><MicIcon /></MicButton>
      </Composer>

      <Watermark>
        PROPERTY OF
        <GroupLogo />
      </Watermark>
    </Page>
  );
}
